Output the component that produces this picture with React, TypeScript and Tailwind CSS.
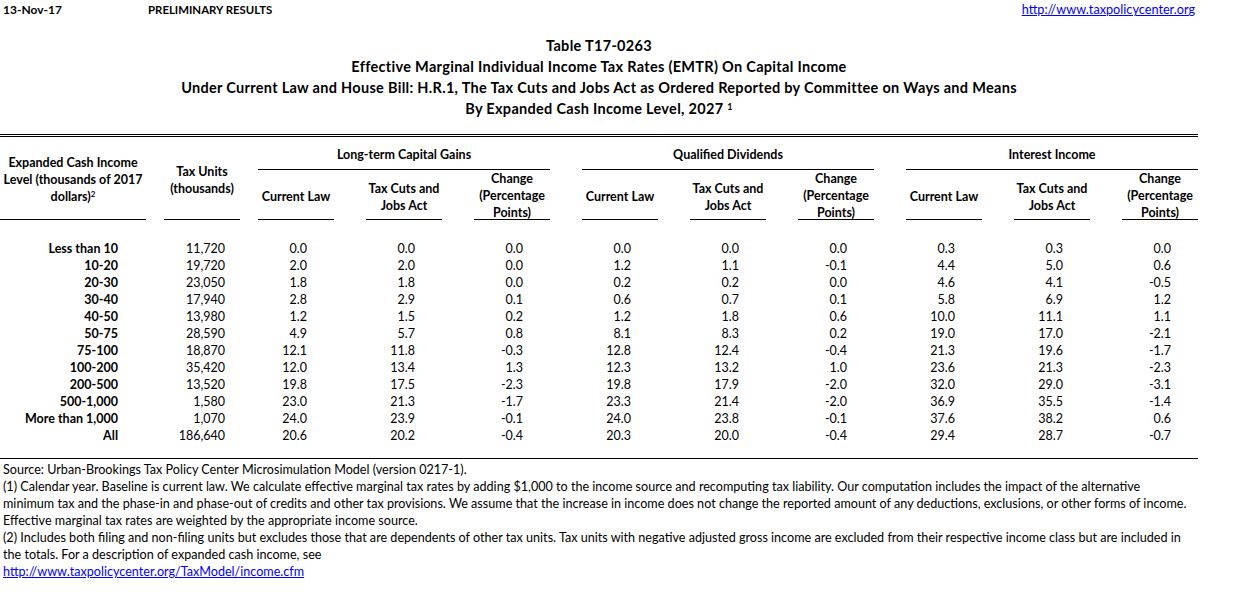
import React from 'react';

const cols = [
    { w: 'w-[146px]', ml: '', pr: 'pr-[28px]' },
    { w: 'w-[76px]', ml: 'ml-[18px]', pr: 'pr-[15px]' },
    { w: 'w-[76px]', ml: 'ml-[18px]', pr: 'pr-[27px]' },
    { w: 'w-[76px]', ml: 'ml-[32px]', pr: 'pr-[27px]' },
    { w: 'w-[76px]', ml: 'ml-[32px]', pr: 'pr-[27px]' },
    { w: 'w-[76px]', ml: 'ml-[32px]', pr: 'pr-[27px]' },
    { w: 'w-[76px]', ml: 'ml-[32px]', pr: 'pr-[27px]' },
    { w: 'w-[76px]', ml: 'ml-[32px]', pr: 'pr-[27px]' },
    { w: 'w-[76px]', ml: 'ml-[32px]', pr: 'pr-[27px]' },
    { w: 'w-[76px]', ml: 'ml-[32px]', pr: 'pr-[27px]' },
    { w: 'w-[76px]', ml: 'ml-[32px]', pr: 'pr-[27px]' },
];

const rows = [
    ['Less than 10', '11,720', '0.0', '0.0', '0.0', '0.0', '0.0', '0.0', '0.3', '0.3', '0.0'],
    ['10-20', '19,720', '2.0', '2.0', '0.0', '1.2', '1.1', '-0.1', '4.4', '5.0', '0.6'],
    ['20-30', '23,050', '1.8', '1.8', '0.0', '0.2', '0.2', '0.0', '4.6', '4.1', '-0.5'],
    ['30-40', '17,940', '2.8', '2.9', '0.1', '0.6', '0.7', '0.1', '5.8', '6.9', '1.2'],
    ['40-50', '13,980', '1.2', '1.5', '0.2', '1.2', '1.8', '0.6', '10.0', '11.1', '1.1'],
    ['50-75', '28,590', '4.9', '5.7', '0.8', '8.1', '8.3', '0.2', '19.0', '17.0', '-2.1'],
    ['75-100', '18,870', '12.1', '11.8', '-0.3', '12.8', '12.4', '-0.4', '21.3', '19.6', '-1.7'],
    ['100-200', '35,420', '12.0', '13.4', '1.3', '12.3', '13.2', '1.0', '23.6', '21.3', '-2.3'],
    ['200-500', '13,520', '19.8', '17.5', '-2.3', '19.8', '17.9', '-2.0', '32.0', '29.0', '-3.1'],
    ['500-1,000', '1,580', '23.0', '21.3', '-1.7', '23.3', '21.4', '-2.0', '36.9', '35.5', '-1.4'],
    ['More than 1,000', '1,070', '24.0', '23.9', '-0.1', '24.0', '23.8', '-0.1', '37.6', '38.2', '0.6'],
    ['All', '186,640', '20.6', '20.2', '-0.4', '20.3', '20.0', '-0.4', '29.4', '28.7', '-0.7'],
];

const groups = ['Long-term Capital Gains', 'Qualified Dividends', 'Interest Income'];

// one income group: title over three sub columns
const Group = ({ title, first }: { title: string; first?: boolean }) => (
    <div className={`w-[292px] flex flex-col ${first ? 'ml-[18px]' : 'ml-[32px]'}`}>
        <div className="h-[33px] pt-[2px] flex items-center justify-center border-b border-black">{title}</div>
        <div className="h-[50px] flex">
            <div className="w-[76px] pt-[4px] flex items-center justify-center border-b border-black">Current Law</div>
            <div className="w-[76px] ml-[32px] pt-[4px] flex items-center justify-center text-center border-b border-black">
                Tax Cuts and<br />Jobs Act
            </div>
            <div className="w-[76px] ml-[32px] pt-[2px] flex items-center justify-center text-center border-b border-black">
                Change<br />(Percentage<br />Points)
            </div>
        </div>
    </div>
);

export default function App() {
    return (
        <div className="w-[1247px] h-[596px] bg-white text-black font-['Lato','Liberation_Sans',sans-serif] overflow-hidden">
            {/* top line */}
            <div className="h-[20px] flex items-center text-[12px] font-bold">
                <span className="w-[148px] pl-[3px]">13-Nov-17</span>
                <span className="text-[11.4px]">PRELIMINARY RESULTS</span>
                <span className="ml-auto mr-[52px] font-normal text-[12.7px] text-[#0000ff] underline">http://www.taxpolicycenter.org</span>
            </div>

            {/* titles */}
            <div className="w-[1198px] mt-[15px] flex flex-col items-center text-[14.5px] tracking-[0.3px] font-bold leading-[21px]">
                <div>Table T17-0263</div>
                <div>Effective Marginal Individual Income Tax Rates (EMTR) On Capital Income</div>
                <div>Under Current Law and House Bill: H.R.1, The Tax Cuts and Jobs Act as Ordered Reported by Committee on Ways and Means</div>
                <div>By Expanded Cash Income Level, 2027 <sup className="text-[9px]">1</sup></div>
            </div>

            {/* double rule */}
            <div className="w-[1198px] h-[3px] mt-[15px] border-y border-black" />

            {/* header */}
            <div className="flex text-[12.5px] font-bold leading-[17px]">
                <div className="w-[146px] h-[83px] pt-[3px] flex items-center justify-center text-center border-b border-black">
                    <div>
                        Expanded Cash Income<br />Level (thousands of 2017<br />dollars)<sup className="text-[8px]">2</sup>
                    </div>
                </div>
                <div className="w-[76px] h-[83px] ml-[18px] pt-[3px] flex items-center justify-center text-center border-b border-black">
                    Tax Units<br />(thousands)
                </div>
                {groups.map((g, i) => (
                    <Group key={g} title={g} first={i === 0} />
                ))}
            </div>

            {/* data */}
            <div className="pt-[20px] text-[12.5px] leading-[17px]">
                {rows.map(r => (
                    <div key={r[0]} className="flex h-[17px]">
                        {r.map((v, i) => (
                            <div key={i} className={`${cols[i].w} ${cols[i].ml} ${cols[i].pr} text-right whitespace-nowrap ${i === 0 ? 'font-bold' : ''}`}>
                                {v}
                            </div>
                        ))}
                    </div>
                ))}
                <div className="w-[1198px] h-[15px] border-b border-black" />
            </div>

            {/* notes */}
            <div className="pl-[3px] pt-[2px] text-[12.6px] leading-[17px] whitespace-nowrap">
                <div>Source: Urban-Brookings Tax Policy Center Microsimulation Model (version 0217-1).</div>
                <div>(1) Calendar year. Baseline is current law. We calculate effective marginal tax rates by adding $1,000 to the income source and recomputing tax liability. Our computation includes the impact of the alternative</div>
                <div>minimum tax and the phase-in and phase-out of credits and other tax provisions. We assume that the increase in income does not change the reported amount of any deductions, exclusions, or other forms of income.</div>
                <div>Effective marginal tax rates are weighted by the appropriate income source.</div>
                <div>(2) Includes both filing and non-filing units but excludes those that are dependents of other tax units. Tax units with negative adjusted gross income are excluded from their respective income class but are included in</div>
                <div>the totals. For a description of expanded cash income, see</div>
                <div className="text-[#0000ff] underline">http://www.taxpolicycenter.org/TaxModel/income.cfm</div>
            </div>
        </div>
    );
}
